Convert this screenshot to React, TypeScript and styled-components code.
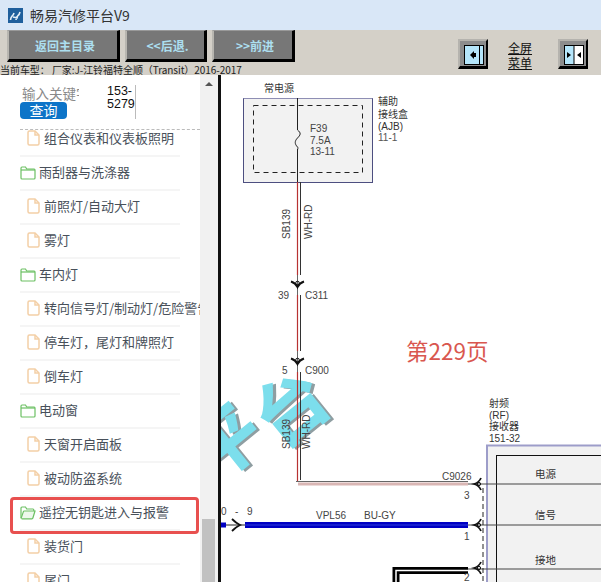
import styled, { createGlobalStyle } from 'styled-components';

const font = `"Noto Sans CJK SC", "Liberation Sans", sans-serif`;

const menuItems = [
	{ label: '组合仪表和仪表板照明', kind: 'file' },
	{ label: '雨刮器与洗涤器', kind: 'folder' },
	{ label: '前照灯/自动大灯', kind: 'file' },
	{ label: '雾灯', kind: 'file' },
	{ label: '车内灯', kind: 'folder' },
	{ label: '转向信号灯/制动灯/危险警告灯', kind: 'file' },
	{ label: '停车灯，尾灯和牌照灯', kind: 'file' },
	{ label: '倒车灯', kind: 'file' },
	{ label: '电动窗', kind: 'folder' },
	{ label: '天窗开启面板', kind: 'file' },
	{ label: '被动防盗系统', kind: 'file' },
	{ label: '遥控无钥匙进入与报警', kind: 'open' },
	{ label: '装货门', kind: 'file' },
	{ label: '尾门', kind: 'file' },
];

const FileIcon = () => (
	<svg width="13" height="16" viewBox="0 0 13 16" fill="none" stroke="#f3cfa6" strokeWidth="1.5">
		<path d="M2.5 1h5.5l4 4v8.5a1.5 1.5 0 0 1-1.5 1.5H2.5A1.5 1.5 0 0 1 1 13.5v-11A1.5 1.5 0 0 1 2.5 1z" />
		<path d="M8 1v4h4" />
	</svg>
);

const FolderIcon = () => (
	<svg width="16" height="14" viewBox="0 0 16 14" fill="none" stroke="#6cc063" strokeWidth="1.2">
		<path d="M1 2.2c0-.7.4-1.2 1-1.2h3.5l1.2 2H14.2c.5 0 .8.4.8 1v8c0 .6-.4 1-1 1H2c-.6 0-1-.4-1-1z" />
		<path d="M1 4h14" />
	</svg>
);

const OpenFolderIcon = () => (
	<svg width="16" height="14" viewBox="0 0 16 14" fill="none" stroke="#6cc063" strokeWidth="1.2">
		<path d="M1 12V2c0-.6.4-1 1-1h3.5l1.2 2H13c.5 0 .8.3.8 1v1" />
		<path d="M1 12.6l2.4-7c.1-.4.4-.6.8-.6H15l-2.2 7.2c-.1.4-.4.6-.8.6H1.6" fill="#eef8ec" />
	</svg>
);

const Connector = ({ x, y }: { x: number; y: number }) => (
	<g fill="none" stroke="#111">
		<path d={`M${x - 6.5} ${y - 1.5} Q${x - 2} ${y} ${x} ${y + 4} Q${x + 2} ${y} ${x + 6.5} ${y - 1.5}`} strokeWidth="2" />
		<circle cx={x} cy={y} r="1.8" strokeWidth="1" />
	</g>
);

const SideConnector = ({ x, y }: { x: number; y: number }) => (
	<g fill="none" stroke="#111">
		<path d={`M${x + 3} ${y - 6} Q${x + 1} ${y - 1.5} ${x - 4} ${y} Q${x + 1} ${y + 1.5} ${x + 3} ${y + 6}`} strokeWidth="1.8" />
		<circle cx={x + 1} cy={y} r="1.6" strokeWidth="1" />
	</g>
);

const WatermarkChar = ({ x, y, char }: { x: number; y: number; char: string }) => (
	<g transform={`translate(${x} ${y}) rotate(-39)`} fontFamily={font} fontWeight="700" fontSize="70" textAnchor="middle">
		<text y="26" x="2" dy="3" fill="#8f9ea2" stroke="#8f9ea2" strokeWidth="1.5">{char}</text>
		<text y="26" fill="#7cdeec" stroke="#7cdeec" strokeWidth="1.5">{char}</text>
	</g>
);

const WiringDiagram = () => (
	<DiagramSvg viewBox="221 75 380 507">
		<WatermarkChar x={225} y={442} char="平" />
		<WatermarkChar x={291} y={408} char="台" />

		<rect x="243.5" y="98.5" width="129" height="84" fill="#f2f2f2" stroke="#4d4f80" />
		<path d="M243.5 98.5H372.5" stroke="#8e8eb4" />
		<rect x="253.5" y="105.5" width="109" height="67" fill="none" stroke="#222" strokeDasharray="5 4" />
		<path d="M297.5 98V130M297.5 149V182" stroke="#222" fill="none" />
		<path d="M297.5 130c4 3 3 5 0 8c-3 3-3 6 0 9c1 1 0 2 0 3" stroke="#222" fill="none" />

		<path d="M297.5 182V275M297.5 295V351M297.5 372V482" stroke="#b83232" strokeWidth="1.2" fill="none" />
		<path d="M300.5 182V275M300.5 295V351M300.5 372V480" stroke="#333" fill="none" />
		<path d="M297.5 275V295M297.5 351V372" stroke="#666" fill="none" />
		<path d="M296 481.5H468" stroke="#666" fill="none" />
		<path d="M298 484H468" stroke="#d9b6b4" strokeWidth="3" fill="none" />
		<Connector x={297.5} y={283} />
		<Connector x={297.5} y={360} />

		<rect x="487" y="445.5" width="120" height="150" fill="#f2f2f2" stroke="#9d9dc9" strokeWidth="2" />
		<rect x="496.5" y="455.5" width="120" height="140" fill="none" stroke="#111" />
		<path d="M468 484H601M468 525H601M468 569H601" stroke="#444" fill="none" />
		<path d="M483 488V582" stroke="#222" strokeDasharray="5 3" fill="none" />

		<path d="M245 525H468" stroke="#0000c4" strokeWidth="6" fill="none" />
		<path d="M245 525H468" stroke="#2f3fd8" strokeWidth="1" fill="none" />
		<path d="M221 525H226" stroke="#0000c4" strokeWidth="5" fill="none" />
		<path d="M226 525H245" stroke="#222" fill="none" />
		<path d="M232 519Q236 523 240 525Q236 527 232 531" stroke="#111" strokeWidth="1.8" fill="none" />

		<path d="M468 570.5H396V582" stroke="#000" strokeWidth="7" fill="none" />
		<path d="M468 570.5H396V582" stroke="#fff" strokeWidth="1.5" fill="none" />

		<SideConnector x={478} y={484} />
		<SideConnector x={478} y={525} />
		<SideConnector x={478} y={568} />

		<g fontFamily={font} fontSize="10" fill="#333">
			<text x="264" y="92">常电源</text>
			<text x="378" y="105">辅助</text>
			<text x="378" y="118">接线盒</text>
			<text x="378" y="130" fontFamily="Liberation Sans">(AJB)</text>
			<text x="378" y="141" fontFamily="Liberation Sans" fill="#555">11-1</text>
			<text x="489" y="407">射频</text>
			<text x="489" y="419" fontFamily="Liberation Sans">(RF)</text>
			<text x="489" y="430">接收器</text>
			<text x="489" y="442" fontFamily="Liberation Sans">151-32</text>
			<text x="535" y="478" fontSize="10.5">电源</text>
			<text x="535" y="519" fontSize="10.5">信号</text>
			<text x="535" y="564" fontSize="10.5">接地</text>
		</g>
		<g fontFamily="Liberation Sans" fontSize="10" fill="#444">
			<text x="310" y="132">F39</text>
			<text x="310" y="144">7.5A</text>
			<text x="310" y="155">13-11</text>
			<text x="278" y="299">39</text>
			<text x="305" y="299">C311</text>
			<text x="282" y="374">5</text>
			<text x="305" y="374">C900</text>
			<text x="442" y="480">C9026</text>
			<text x="464" y="499">3</text>
			<text x="464" y="540">1</text>
			<text x="464" y="581">2</text>
			<text x="316" y="519">VPL56</text>
			<text x="364" y="519">BU-GY</text>
			<text x="221" y="515">0</text>
			<text x="235" y="515">-</text>
			<text x="247" y="515">9</text>
			<text transform="translate(290 239) rotate(-90)">SB139</text>
			<text transform="translate(312 239) rotate(-90)">WH-RD</text>
			<text transform="translate(290 449) rotate(-90)">SB139</text>
			<text transform="translate(310 449) rotate(-90)">WH-RD</text>
		</g>
		<text x="406" y="360" fontFamily={font} fontSize="22.5" fill="#d9574f">第229页</text>
	</DiagramSvg>
);

export default function App() {
	return (
		<Page>
			<GlobalStyle />
			<TitleBar>
				<AppIcon viewBox="0 0 15 15">
					<rect width="15" height="15" fill="#1f5f9c" />
					<path d="M2.5 12C3 7 5 9 6 5M8 12c0-5 3-3 4-8M5 9l5 1" stroke="#e4eef7" strokeWidth="1.6" fill="none" />
				</AppIcon>
				畅易汽修平台V9
			</TitleBar>
			<Header>
				<HeaderLeft>
					<ButtonRow>
						<NavButton $width={113}>返回主目录</NavButton>
						<NavButton $width={82}>&lt;&lt;后退.</NavButton>
						<NavButton $width={83}>&gt;&gt;前进</NavButton>
					</ButtonRow>
					<CarInfo>当前车型： 厂家:J-江铃福特全顺（Transit）2016-2017</CarInfo>
				</HeaderLeft>
				<HeaderRight>
					<IconButton>
						<svg width="20" height="20" viewBox="0 0 20 20">
							<rect x="0.5" y="0.5" width="19" height="19" fill="#b5e6fb" stroke="#000" />
							<path d="M15.5 1V19" stroke="#000" />
							<path d="M6 10l4-4v8z M10 8h2v4h-2z" fill="#000" />
						</svg>
					</IconButton>
					<MenuLinks>
						<span>全屏</span>
						<span>菜单</span>
					</MenuLinks>
					<IconButton>
						<svg width="20" height="20" viewBox="0 0 20 20">
							<rect x="0.5" y="0.5" width="19" height="19" fill="#fff" stroke="#000" />
							<rect x="1" y="1" width="9" height="18" fill="#b5e6fb" />
							<path d="M10 1V19" stroke="#000" />
							<path d="M3 7v6l4-3z M17 7v6l-4-3z" fill="#000" />
						</svg>
					</IconButton>
				</HeaderRight>
			</Header>
			<Body>
				<Sidebar>
					<SidePanel>
						<SearchBar>
							<SearchLeft>
								<KeywordLabel>输入关键字</KeywordLabel>
								<SearchButton>查询</SearchButton>
							</SearchLeft>
							<KeywordValue>153-5279</KeywordValue>
						</SearchBar>
						<MenuList>
							{menuItems.map((item) => (
								<MenuRow key={item.label} $folder={item.kind !== 'file'} $marked={item.kind === 'open'}>
									{item.kind === 'file' && <FileIcon />}
									{item.kind === 'folder' && <FolderIcon />}
									{item.kind === 'open' && <OpenFolderIcon />}
									<span>{item.label}</span>
								</MenuRow>
							))}
						</MenuList>
					</SidePanel>
					<ScrollTrack>
						<ScrollArrow />
						<ScrollThumb />
					</ScrollTrack>
				</Sidebar>
				<DiagramPane>
					<WiringDiagram />
				</DiagramPane>
			</Body>
		</Page>
	);
}

const GlobalStyle = createGlobalStyle`
	html, body {
		margin: 0;
		padding: 0;
		background: #fff;
	}
`;

const Page = styled.div`
	width: 601px;
	height: 582px;
	display: flex;
	flex-direction: column;
	overflow: hidden;
	font-family: ${font};
`;

const TitleBar = styled.div`
	height: 30px;
	flex: none;
	display: flex;
	align-items: center;
	gap: 7px;
	padding-left: 8px;
	background: #d9e7f7;
	color: #333;
	font-size: 14px;
`;

const AppIcon = styled.svg`
	width: 15px;
	height: 15px;
`;

const Header = styled.div`
	height: 45px;
	flex: none;
	display: flex;
	justify-content: space-between;
	background: #d4d0c8;
	overflow: hidden;
`;

const HeaderLeft = styled.div`
	display: flex;
	flex-direction: column;
`;

const ButtonRow = styled.div`
	display: flex;
	gap: 5px;
	padding-left: 7px;
`;

const NavButton = styled.div<{ $width: number }>`
	width: ${(p) => p.$width}px;
	height: 32px;
	box-sizing: border-box;
	display: flex;
	align-items: center;
	justify-content: center;
	padding-left: 4px;
	background: #777;
	border-style: solid;
	border-width: 1px 3px 3px 2px;
	border-color: #999 #000 #000 #b8b6b0;
	color: #acdff0;
	font-size: 12px;
	font-weight: 700;
`;

const CarInfo = styled.div`
	margin-top: 2px;
	font-size: 10px;
	line-height: 11px;
	letter-spacing: -0.06px;
	white-space: nowrap;
	color: #222;
`;

const HeaderRight = styled.div`
	display: flex;
	align-items: flex-start;
	gap: 20px;
	padding: 9px 13px 0 0;
`;

const IconButton = styled.div`
	width: 30px;
	height: 30px;
	box-sizing: border-box;
	display: flex;
	align-items: center;
	justify-content: center;
	background: #8c8c8c;
	border-style: solid;
	border-width: 2px 2px 3px 2px;
	border-color: #b5b3ae #000 #000 #b5b3ae;
	padding: 3px 0 0 2px;
`;

const MenuLinks = styled.div`
	width: 24px;
	margin: 1px 6px 0 0;
	display: flex;
	flex-direction: column;
	align-items: center;
	font-size: 12px;
	line-height: 15px;
	color: #111;
	text-decoration: underline;
`;

const Body = styled.div`
	flex: 1;
	min-height: 0;
	display: flex;
`;

const Sidebar = styled.div`
	width: 218px;
	flex: none;
	display: flex;
`;

const SidePanel = styled.div`
	width: 200px;
	display: flex;
	flex-direction: column;
	overflow: hidden;
	background: #fff;
`;

const SearchBar = styled.div`
	height: 55px;
	flex: none;
	box-sizing: border-box;
	margin-left: 20px;
	display: flex;
	border-bottom: 1px dashed #bbb;
`;

const SearchLeft = styled.div`
	width: 87px;
	padding-top: 9px;
`;

const KeywordLabel = styled.div`
	width: 57px;
	margin-left: 2px;
	overflow: hidden;
	white-space: nowrap;
	font-size: 13.5px;
	line-height: 18px;
	color: #8a8a8a;
`;

const SearchButton = styled.div`
	width: 47px;
	height: 17px;
	border-radius: 4px;
	background: #0d74c8;
	color: #fff;
	font-size: 14px;
	line-height: 17px;
	text-align: center;
`;

const KeywordValue = styled.div`
	width: 28px;
	height: 34px;
	margin-top: 10px;
	border-right: 1px solid #bbb;
	font-family: "Liberation Sans", sans-serif;
	font-size: 12.5px;
	line-height: 13px;
	color: #111;
	word-break: break-all;
	overflow: hidden;
`;

const MenuList = styled.div`
	margin: 0 20px;
	display: flex;
	flex-direction: column;
`;

const MenuRow = styled.div<{ $folder: boolean; $marked: boolean }>`
	position: relative;
	height: 34px;
	flex: none;
	box-sizing: border-box;
	display: flex;
	align-items: flex-end;
	gap: ${(p) => (p.$folder ? 3 : 4)}px;
	padding: 0 0 8px ${(p) => (p.$folder ? 0 : 7)}px;
	border-bottom: 2px solid #f5f5f5;
	font-size: 13px;
	line-height: 18px;
	white-space: nowrap;
	color: #48505a;

	svg {
		flex: none;
		margin-bottom: 1px;
	}

	&:first-child {
		height: 27px;
	}

	${(p) =>
		p.$marked &&
		`
		&::after {
			content: '';
			position: absolute;
			left: -10px;
			right: -19px;
			top: 0;
			bottom: -5px;
			border: 3px solid #e8504f;
			border-radius: 4px;
		}
	`}
`;

const ScrollTrack = styled.div`
	position: relative;
	width: 18px;
	background: #f1f1f1;
`;

const ScrollArrow = styled.div`
	width: 0;
	margin: 7px 0 0 5px;
	border-left: 4px solid transparent;
	border-right: 4px solid transparent;
	border-bottom: 4px solid #555;
`;

const ScrollThumb = styled.div`
	position: absolute;
	left: 2px;
	bottom: 0;
	width: 13px;
	height: 63px;
	background: #c1c1c1;
`;

const DiagramPane = styled.div`
	flex: 1;
	min-width: 0;
	box-sizing: border-box;
	border-left: 3px solid #111;
	background: #fff;
	overflow: hidden;
`;

const DiagramSvg = styled.svg`
	display: block;
	width: 380px;
	height: 507px;
`;
